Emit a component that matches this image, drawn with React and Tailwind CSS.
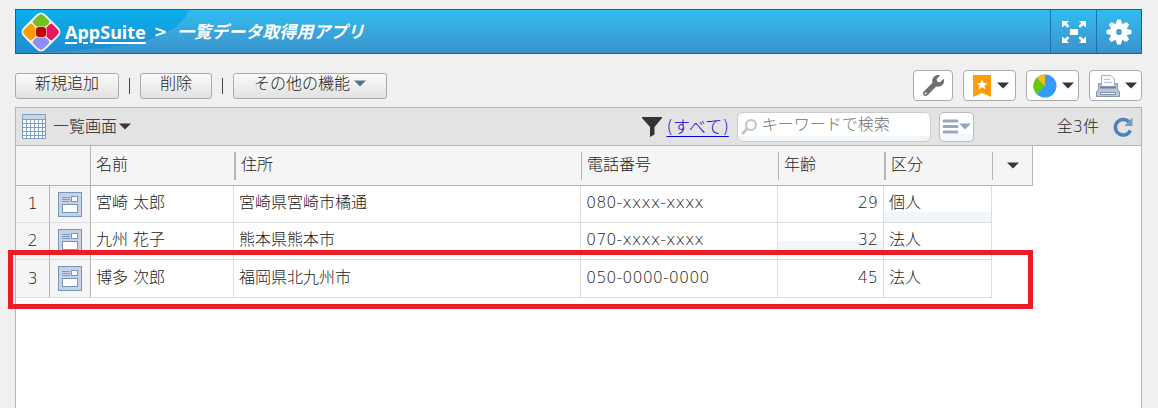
import { FaWrench } from 'react-icons/fa'

const rows = [
  { id: 1, name: '宮崎 太郎', address: '宮崎県宮崎市橘通', tel: '080-xxxx-xxxx', age: 29, kind: '個人' },
  { id: 2, name: '九州 花子', address: '熊本県熊本市', tel: '070-xxxx-xxxx', age: 32, kind: '法人' },
  { id: 3, name: '博多 次郎', address: '福岡県北九州市', tel: '050-0000-0000', age: 45, kind: '法人' },
]

const columns = [
  { label: '名前', divider: '' },
  { label: '住所', divider: 'border-l-2' },
  { label: '電話番号', divider: 'border-l' },
  { label: '年齢', divider: 'border-l' },
  { label: '区分', divider: 'border-l-2' },
]

const ageShade = {
  2: 'bg-[linear-gradient(to_bottom,transparent_18px,#f1f6fb_18px,#f1f6fb_28px,transparent_28px)]',
}

const kindShade = {
  1: 'bg-[linear-gradient(to_top,#f1f6fb_10px,transparent_10px)]',
}

function Caret({ className = 'text-[#3b3336]' }) {
  return (
    <svg width="12" height="7" viewBox="0 0 12 7" className={`shrink-0 ${className}`} aria-hidden="true">
      <path d="M0 0.5H12L6 6.5Z" fill="currentColor" />
    </svg>
  )
}

function Logo() {
  return (
    <svg width="40" height="40" viewBox="0 0 40 40" className="shrink-0" aria-hidden="true">
      <path d="M20 0.5Q23 0.500 26 4L36 14Q39.500 17 39.500 20Q39.500 23 36 26L26 36Q23 39.500 20 39.500Q17 39.500 14 36L4 26Q0.500 23 0.500 20Q0.500 17 4 14L14 4Q17 0.500 20 0.500Z" fill="#eef3ee" />
      <path d="M20 2Q22.500 2.500 28.500 9.500Q28 12 24.500 14.500H15.500Q12 12 11.500 9.500Q17.500 2.500 20 2Z" fill="#76c01c" />
      <path d="M38 20Q37.500 22.500 30.500 28.500Q28 28 25.500 24.500V15.500Q28 12 30.500 11.500Q37.500 17.500 38 20Z" fill="#e5195c" />
      <path d="M20 38Q17.500 37.500 11.500 30.500Q12 28 15.500 25.500H24.500Q28 28 28.500 30.500Q22.500 37.500 20 38Z" fill="#8c8cff" />
      <path d="M2 20Q2.500 17.500 9.500 11.500Q12 12 14.500 15.500V24.500Q12 28 9.500 28.500Q2.500 22.500 2 20Z" fill="#ff9c00" />
      <rect x="15" y="15" width="10" height="10" rx="3" fill="#c00404" />
    </svg>
  )
}

function ExpandIcon() {
  return (
    <svg width="24" height="22" viewBox="0 0 24 22" fill="#fff" aria-hidden="true">
      <rect x="8" y="8" width="8" height="6" />
      <path d="M0 0H7L4.800 2.200L7.500 5L5.800 6.800L2.500 4.200L0 6.500Z" />
      <path d="M24 0H17L19.200 2.200L16.500 5L18.200 6.800L21.500 4.200L24 6.500Z" />
      <path d="M0 22H7L4.800 19.800L7.500 17L5.800 15.200L2.500 17.800L0 15.500Z" />
      <path d="M24 22H17L19.200 19.800L16.500 17L18.200 15.200L21.500 17.800L24 15.500Z" />
    </svg>
  )
}

function GearIcon() {
  return (
    <svg width="26" height="26" viewBox="-13 -13 26 26" aria-hidden="true">
      <g fill="#fff">
        {[0, 45, 90, 135, 180, 225, 270, 315].map((a) => (
          <path key={a} d="M-3.500 -7L-1.800 -12.500H1.800L3.500 -7Z" transform={`rotate(${a})`} />
        ))}
      </g>
      <circle r="5.700" fill="none" stroke="#fff" strokeWidth="5.600" />
    </svg>
  )
}

function BookmarkIcon() {
  return (
    <svg width="20" height="22" viewBox="0 0 20 22" aria-hidden="true">
      <path d="M1 0H19V22L10 18L1 22Z" fill="#ff9c0a" />
      <path d="M10 4L11.500 8L15.500 8.200L12.400 10.700L13.500 14.500L10 12.300L6.500 14.500L7.600 10.700L4.500 8.200L8.500 8Z" fill="#fff" />
    </svg>
  )
}

function PieIcon() {
  return (
    <svg width="24" height="24" viewBox="0 0 24 24" aria-hidden="true">
      <circle cx="12" cy="12" r="11.500" fill="#359cff" />
      <path d="M12 12L4 20.300A11.500 11.500 0 0 1 3.900 3.900Z" fill="#62cc0c" />
      <path d="M12 12L3.900 3.900A11.500 11.500 0 0 1 12 0.500Z" fill="#f9bd16" />
    </svg>
  )
}

function PrinterIcon() {
  return (
    <svg width="24" height="22" viewBox="0 0 24 22" aria-hidden="true">
      <path d="M2.500 8.500H21.500V14L23.500 17V21.500H0.500V17L2.500 14Z" fill="#b7c5da" stroke="#8493ab" />
      <path d="M5.500 11.500V0.500H15L18.500 4V11.500Z" fill="#f6faff" stroke="#9db1cc" />
      <path d="M8 4.500H14M8 7.500H16" stroke="#a9c6e8" />
      <path d="M4 12.500H20" stroke="#73829b" strokeWidth="2" />
      <path d="M4.500 17.500H19.500V19.500H4.500Z" fill="#eef3fa" stroke="#8493ab" />
    </svg>
  )
}

function GridIcon() {
  return (
    <svg width="24" height="25" viewBox="0 0 24 25" aria-hidden="true">
      <rect width="24" height="25" fill="#7d9fc3" />
      <rect x="1" y="1" width="22" height="4" fill="#cbd5e8" />
      {[6, 10, 14, 18, 22].map((y) =>
        [1, 5, 9, 13, 17, 21].map((x) => <rect key={`${x}-${y}`} x={x} y={y} width={x === 21 ? 2 : 3} height={y === 22 ? 2 : 3} fill="#fff" />)
      )}
    </svg>
  )
}

function FormIcon() {
  return (
    <svg width="24" height="25" viewBox="0 0 24 25" aria-hidden="true">
      <rect x="0.500" y="0.500" width="23" height="24" fill="#c5d1e6" stroke="#7496bd" />
      <path d="M4 5.500H12M4 7.500H12M4 9.500H12" stroke="#7c9cc0" />
      <rect x="13.500" y="4.500" width="6" height="5" fill="#fff" stroke="#7496bd" />
      <rect x="4.500" y="12.500" width="15" height="8" fill="#fff" stroke="#7496bd" />
    </svg>
  )
}

function FunnelIcon() {
  return (
    <svg width="20" height="20" viewBox="0 0 20 20" aria-hidden="true">
      <path d="M0 0H20V1L12.500 10V17.500L8 20V10L0 1Z" fill="#333" />
    </svg>
  )
}

function RefreshIcon() {
  return (
    <svg width="20" height="20" viewBox="0 0 20 20" aria-hidden="true">
      <path d="M16 5A7.800 7.800 0 1 0 17.300 13.500" fill="none" stroke="#4d83b8" strokeWidth="3.500" />
      <path d="M19.500 0.500V9H11.500Z" fill="#6f9fcc" />
    </svg>
  )
}

function Button({ children, className }) {
  return (
    <button
      type="button"
      className={`flex h-[26px] items-center justify-center gap-1 rounded-[3px] border border-[#aaa] bg-linear-to-b from-[#fafafa] to-[#e2e2e2] pb-1 ${className}`}
    >
      {children}
    </button>
  )
}

function ToolButton({ label, children, caret = true }) {
  return (
    <button
      type="button"
      aria-label={label}
      className={`flex h-[31px] items-center justify-center gap-[5px] rounded-[4px] border border-[#aaa] bg-white ${caret ? 'w-[53px] pl-0.5' : 'w-10'}`}
    >
      {children}
      {caret && <Caret />}
    </button>
  )
}

export default function App() {
  return (
    <div className="flex min-h-screen flex-col bg-[#f0f0f0] pt-[9px] pr-4 pl-[15px] font-['DejaVu_Sans','Noto_Sans_CJK_JP',sans-serif] text-[16px] leading-5 font-light text-[#222]">
      <header className="relative flex h-[45px] items-stretch border border-[#0d669f] bg-linear-to-b from-[#2fbdf0] to-[#3b92cb] text-white">
        <svg className="absolute top-0 left-0" width="174" height="43" viewBox="0 0 174 43" aria-hidden="true">
          <defs>
            <linearGradient id="swoosh" x1="0" y1="0" x2="0" y2="1">
              <stop offset="0" stopColor="#08b0ee" />
              <stop offset="1" stopColor="#238bcb" />
            </linearGradient>
          </defs>
          <path d="M0 0H173Q166 20 126 32Q90 40 12 43H0Z" fill="url(#swoosh)" />
        </svg>
        <div className="relative flex flex-1 items-center pl-[5px] font-bold">
          <Logo />
          <a href="#" className="ml-1 font-['Noto_Sans',sans-serif] text-[18px] underline decoration-2 underline-offset-3">AppSuite</a>
          <span className="ml-2">&gt;</span>
          <h1 className="ml-[10px] text-[17px] italic">一覧データ取得用アプリ</h1>
        </div>
        <button type="button" aria-label="全画面表示" className="flex w-[46px] items-center justify-center border-l border-[#1b73ad]">
          <ExpandIcon />
        </button>
        <button type="button" aria-label="設定" className="flex w-[45px] items-center justify-center border-l border-[#1b73ad]">
          <GearIcon />
        </button>
      </header>

      <div className="mt-4 flex h-[31px] items-center">
        <Button className="w-[104px]">新規追加</Button>
        <span className="mx-[10px] h-4 w-px bg-[#444]" />
        <Button className="w-[72px]">削除</Button>
        <span className="mx-[10px] h-4 w-px bg-[#444]" />
        <Button className="w-[154px]">
          その他の機能
          <Caret className="text-[#5a7190]" />
        </Button>
        <div className="ml-auto flex gap-[10px]">
          <ToolButton label="アプリ管理" caret={false}>
            <FaWrench className="text-[#707070]" size={21} />
          </ToolButton>
          <ToolButton label="ブックマーク"><BookmarkIcon /></ToolButton>
          <ToolButton label="グラフ"><PieIcon /></ToolButton>
          <ToolButton label="印刷"><PrinterIcon /></ToolButton>
        </div>
      </div>

      <main className="mt-[6px] flex-1 border border-b-0 border-[#b5b5b5] bg-white">
        <div className="flex h-[38px] items-center border-b border-[#b5b5b5] bg-[#e3e3e3] pr-2 pl-[6px]">
          <GridIcon />
          <button type="button" className="ml-[7px] flex items-center gap-0.5">
            一覧画面
            <Caret />
          </button>
          <div className="ml-auto flex items-center">
            <FunnelIcon />
            <a href="#" className="ml-1 text-[17px] text-[#0000e0] underline underline-offset-3">(すべて)</a>
            <label className="relative ml-2 block">
              <svg className="absolute top-[7px] left-1" width="17" height="16" viewBox="0 0 17 16" fill="none" stroke="#c4c4c4" aria-hidden="true">
                <circle cx="10" cy="6" r="5" strokeWidth="2" />
                <path d="M6.500 9.500L1 15" strokeWidth="3" />
              </svg>
              <input
                type="search"
                aria-label="検索"
                placeholder="キーワードで検索"
                className="block h-[30px] w-[194px] rounded-[6px] border border-[#ccc] bg-[linear-gradient(to_top,#f1f6fb_5px,#fff_5px)] pb-1 pl-6 placeholder:text-[#757575]"
              />
            </label>
            <button
              type="button"
              aria-label="検索オプション"
              className="ml-2 flex h-[30px] w-[35px] items-center justify-center rounded-[5px] border border-[#bbb] bg-[linear-gradient(to_top,#f1f6fb_7px,#fff_7px)]"
            >
              <svg width="17" height="15" viewBox="0 0 17 15" stroke="#9aa8bf" strokeWidth="3" strokeLinecap="round" aria-hidden="true">
                <path d="M2 2H15M2 7.500H15M2 13H15" />
              </svg>
              <Caret className="text-[#94a4bd]" />
            </button>
            <span className="ml-[83px]">全3件</span>
            <button type="button" aria-label="更新" className="ml-[14px]">
              <RefreshIcon />
            </button>
          </div>
        </div>

        <div className="relative w-[1017px]">
          <table className="w-full table-fixed border-separate border-spacing-0 text-left">
            <colgroup>
              <col className="w-[34px]" />
              <col className="w-[41px]" />
              <col className="w-[143px]" />
              <col className="w-[347px]" />
              <col className="w-[197px]" />
              <col className="w-[106px]" />
              <col className="w-[108px]" />
              <col className="w-[41px]" />
            </colgroup>
            <thead>
              <tr className="h-10 bg-[#f5f5f5]">
                <th colSpan={2} className="border-r border-b border-[#b5b5b5]" />
                {columns.map((c) => (
                  <th key={c.label} className="border-b border-[#b5b5b5] p-0 font-light">
                    <div className={`h-7 border-[#b5b5b5] pt-[3px] pl-[5px] ${c.divider}`}>{c.label}</div>
                  </th>
                ))}
                <th className="border-r border-b border-[#b5b5b5] p-0">
                  <button type="button" aria-label="列の設定" className="flex h-7 w-full items-center justify-center border-l border-[#b5b5b5]">
                    <Caret />
                  </button>
                </th>
              </tr>
            </thead>
            <tbody>
              {rows.map((r) => (
                <tr key={r.id} className="h-[37px] *:border-[#dedede] *:pt-0 *:pb-0.5 last:h-[38px]">
                  <th className="border-r border-b border-r-[#b5b5b5]! bg-[#f5f5f5] px-0 pb-0! text-center font-light">{r.id}</th>
                  <td className="border-r border-b border-r-[#b5b5b5]! bg-[#f5f5f5] px-2 pb-0!">
                    <button type="button" aria-label={`${r.name}の詳細`} className="block">
                      <FormIcon />
                    </button>
                  </td>
                  <td className="border-r border-b px-[5px]">{r.name}</td>
                  <td className="border-r border-b px-[5px]">{r.address}</td>
                  <td className="border-r border-b px-[5px]">{r.tel}</td>
                  <td className={`border-r border-b px-[5px] text-right ${ageShade[r.id] ?? ''}`}>{r.age}</td>
                  <td className={`border-r border-b px-[5px] ${kindShade[r.id] ?? ''}`}>{r.kind}</td>
                  <td />
                </tr>
              ))}
            </tbody>
          </table>
          {/* Highlight around the last record */}
          <div className="pointer-events-none absolute right-0 -bottom-[11px] -left-2 h-[59px] border-5 border-[#ed1c24]" />
        </div>
      </main>
    </div>
  )
}
